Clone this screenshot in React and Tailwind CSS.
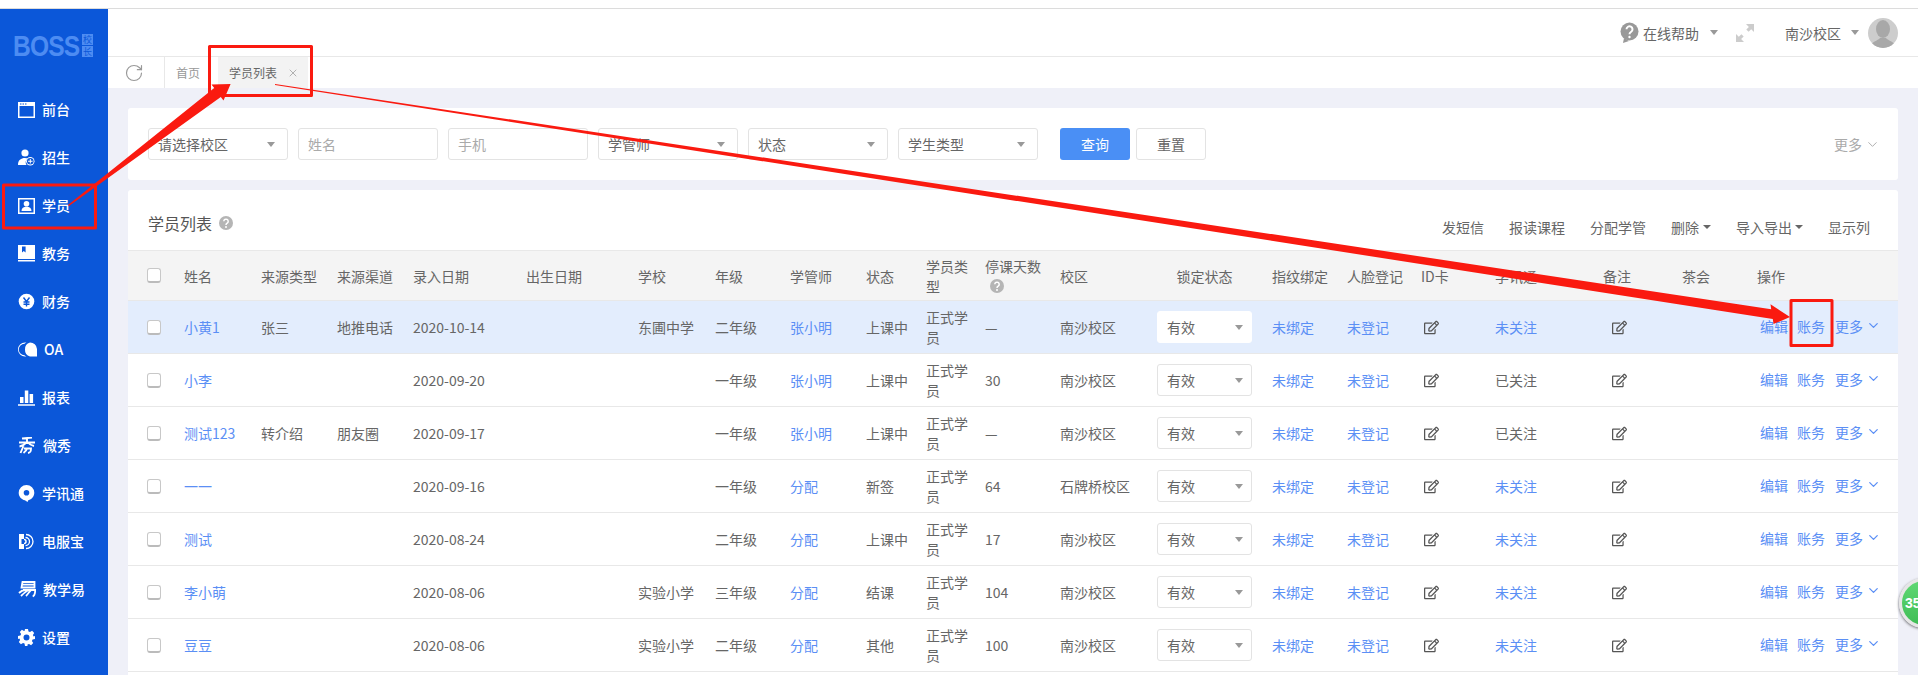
import React from "react";
import { ChevronDown, RotateCw, X } from "lucide-react";
import { FaRegEdit } from "react-icons/fa";

const Ic = ({ children }) => (
  <svg width="17" height="17" viewBox="0 0 17 17" className="shrink-0" fill="#fff">{children}</svg>
);

const nav = [
  ["前台", <Ic><path fillRule="evenodd" d="M0 1h17v16H0zM1.500 5v10.500h14V5z" /><path fill="#0b57d9" d="M2 2.400h1.500v1H2zM4.500 2.400H6v1H4.500zM7 2.400h1.500v1H7z" /></Ic>],
  ["招生", <Ic><circle cx="7" cy="4" r="3.600" /><path d="M0 16c0-5 3-7 7-7 1 0 2 .2 2.800.5A5 5 0 0 0 8.500 16z" /><circle cx="12.300" cy="12.300" r="4.200" fill="#fff" /><circle cx="12.300" cy="12.300" r="3.300" fill="#0b57d9" /><path d="M11.800 10h1v1.800h1.800v1h-1.800v1.800h-1v-1.800H10v-1h1.800z" /></Ic>],
  ["学员", <Ic><path fillRule="evenodd" d="M0 1h17v16H0zM1.500 2.500v13h14v-13z" /><circle cx="8.500" cy="6.800" r="2.800" /><path d="M3.500 14c0-3 2-4.200 5-4.200s5 1.200 5 4.200z" /></Ic>],
  ["教务", <Ic><path fillRule="evenodd" d="M0 0h17v14H0zM4 1.500v6l1.800-1.400L7.600 7.500v-6z" /><path d="M0 15h17v1.500H0z" /></Ic>],
  ["财务", <Ic><circle cx="8.500" cy="8.500" r="7.800" /><path fill="none" stroke="#0b57d9" strokeWidth="1.400" d="M5.500 4.500l3 4 3-4M8.500 8.500v5M5.500 9h6M5.500 11.300h6" /></Ic>],
  ["OA", <svg width="19" height="15" viewBox="0 0 19 15" className="shrink-0" fill="#fff"><path d="M7 0.500a7 7 0 0 0 0 14h1.500a8 8 0 0 1-2-1.300 5.500 5.500 0 0 1 0-11.400A8 8 0 0 1 8.500 .5z" /><path d="M12 .5a7 7 0 0 0-5 7 7 7 0 0 0 5 7h7V7a7 7 0 0 0-7-6.500z" /></svg>],
  ["报表", <Ic><path d="M2 8h3.500v6H2zM6.800 1.500h3.500V14H6.800zM11.600 5h3.500v9h-3.500zM0 15.300h17v1.500H0z" /></Ic>],
  ["微秀", <svg width="18" height="17" viewBox="0 0 18 17" className="shrink-0" fill="none" stroke="#fff" strokeWidth="1.900"><path d="M4 1.500l10-1M1 5.500h16M9 1v6M8 5.500C6.500 8 4 9 1.500 9.500M10 5.500c1.500 2 4 3 6 3.500M5.500 9L2.500 16M6 11.500h7c0 3-.5 4-3 4.500M9 11.500c-.5 2-2 3.500-3.500 4.500" /></svg>],
  ["学讯通", <Ic><path fillRule="evenodd" d="M8.500 0a7.800 7.800 0 0 0-7.800 7.800c0 3.800 2.700 6.800 6.200 7.500L9.500 17l.8-1.800c3.500-.8 6-3.800 6-7.400A7.800 7.800 0 0 0 8.500 0zm0 5a2.800 2.800 0 1 1 0 5.600 2.800 2.800 0 0 1 0-5.600z" /></Ic>],
  ["电服宝", <Ic><path d="M1 1h5v5H3.500v5H6v5H1z" /><path fill="none" stroke="#fff" strokeWidth="1.300" d="M7.500 4.500a4 4 0 0 1 0 8M8 1.500a7 7 0 0 1 0 14" /><path fill="none" stroke="#fff" strokeWidth="1.500" d="M6 6.500a2 2 0 0 1 0 4" /></Ic>],
  ["教学易", <svg width="18" height="17" viewBox="0 0 18 17" className="shrink-0" fill="none" stroke="#fff" strokeWidth="1.800"><path d="M4.500 1h12v5.500H3.500zM4 3.700h12M5 9h12.200c0 3-.5 5.500-2.500 6.500M1 12c2-2 4-3 6-3M3 15c3-3 5-5 8-6M8 15c2-2 3-4 5-6" /></svg>],
  ["设置", <Ic><path fillRule="evenodd" d="M7 0h3l.5 2.400 1.500.7 2.100-1.300 2.100 2.100-1.300 2.100.7 1.500L17 7v3l-2.400.5-.7 1.500 1.300 2.100-2.100 2.100-2.100-1.300-1.500.7L9.500 17H7l-.5-2.400-1.500-.7-2.100 1.300-2.100-2.100 1.300-2.100-.7-1.500L0 10V7l2.400-.5.7-1.500L1.800 2.900 3.900.8 6 2.100l.5-.2zM8.500 5.500a3 3 0 1 0 0 6 3 3 0 0 0 0-6z" /></Ic>],
];

const Caret = () => (
  <span className="inline-block w-0 h-0 border-x-[4.5px] border-x-transparent border-t-[5px] border-t-[#999]" />
);
const SmallCaret = () => (
  <span className="inline-block w-0 h-0 border-x-[4px] border-x-transparent border-t-[4px] border-t-[#666]" />
);

const FSelect = ({ label }) => (
  <div className="w-[140px] h-[32px] border border-[#e3e3e3] rounded-[3px] flex items-center justify-between pl-[9px] pr-[12px] text-[14px] text-[#666]">
    <span>{label}</span>
    <Caret />
  </div>
);
const FInput = ({ label }) => (
  <div className="w-[140px] h-[32px] border border-[#e3e3e3] rounded-[3px] flex items-center pl-[9px] text-[14px] text-[#aaa]">{label}</div>
);

const Help = ({ size = 14 }) => (
  <svg width={size} height={size} viewBox="0 0 14 14" className="shrink-0">
    <circle cx="7" cy="7" r="7" fill="#b5b5b5" />
    <path d="M4.800 5.300a2.200 2.200 0 1 1 3.400 1.900c-.8.500-1.200.9-1.200 1.800" fill="none" stroke="#fff" strokeWidth="1.500" />
    <circle cx="7" cy="11" r="1" fill="#fff" />
  </svg>
);

const colW = ["w-[56px]", "w-[77px]", "w-[76px]", "w-[76px]", "w-[113px]", "w-[112px]", "w-[77px]", "w-[75px]", "w-[76px]", "w-[60px]", "w-[59px]", "w-[75px]", "w-[97px]", "w-[115px]", "w-[75px]", "w-[74px]", "w-[74px]", "w-[108px]", "w-[79px]", "w-[75px]", "w-[141px]"];

const rows = [
  { name: "小黄1", st: "张三", ch: "地推电话", d: "2020-10-14", sc: "东圃中学", g: "二年级", m: "张小明", s: "上课中", days: "—", c: "南沙校区", f: false, on: true },
  { name: "小李", st: "", ch: "", d: "2020-09-20", sc: "", g: "一年级", m: "张小明", s: "上课中", days: "30", c: "南沙校区", f: true },
  { name: "测试123", st: "转介绍", ch: "朋友圈", d: "2020-09-17", sc: "", g: "一年级", m: "张小明", s: "上课中", days: "—", c: "南沙校区", f: true },
  { name: "一一", st: "", ch: "", d: "2020-09-16", sc: "", g: "一年级", m: "分配", s: "新签", days: "64", c: "石牌桥校区", f: false },
  { name: "测试", st: "", ch: "", d: "2020-08-24", sc: "", g: "二年级", m: "分配", s: "上课中", days: "17", c: "南沙校区", f: false },
  { name: "李小萌", st: "", ch: "", d: "2020-08-06", sc: "实验小学", g: "三年级", m: "分配", s: "结课", days: "104", c: "南沙校区", f: false },
  { name: "豆豆", st: "", ch: "", d: "2020-08-06", sc: "实验小学", g: "二年级", m: "分配", s: "其他", days: "100", c: "南沙校区", f: false },
];

const Check = () => (
  <span className="block w-[14px] h-[15px] rounded-[3px] border border-[#c8c8c8] border-b-2 border-b-[#bbb] bg-white" />
);
const link = "text-[#5b8ff5]";
const Pen = () => <FaRegEdit size={15} className="text-[#555]" />;

function Row({ r }) {
  return (
    <tr className={`h-[53px] border-b border-[#e8e8e8] ${r.on ? "bg-[#e3edfd]" : "bg-white"}`}>
      <td className="pl-[19px]"><Check /></td>
      <td className={link}>{r.name}</td>
      <td>{r.st}</td>
      <td>{r.ch}</td>
      <td>{r.d}</td>
      <td></td>
      <td>{r.sc}</td>
      <td>{r.g}</td>
      <td className={link}>{r.m}</td>
      <td>{r.s}</td>
      <td className="pr-[14px]">正式学员</td>
      <td>{r.days}</td>
      <td>{r.c}</td>
      <td>
        <div className={`w-[95px] h-[32px] rounded-[3px] border flex items-center justify-between pl-[9px] pr-[8px] bg-white ${r.on ? "border-white" : "border-[#e3e3e3]"}`}>
          <span>有效</span>
          <Caret />
        </div>
      </td>
      <td className={link}>未绑定</td>
      <td className={link}>未登记</td>
      <td className="pl-[3px]"><Pen /></td>
      <td className={r.f ? "" : link}>{r.f ? "已关注" : "未关注"}</td>
      <td className="pl-[9px]"><Pen /></td>
      <td></td>
      <td className="pl-[3px]">
        <div className={`flex items-center mb-[3px] ${link}`}>
          <span>编辑</span>
          <span className="ml-[9px]">账务</span>
          <span className="ml-[10px]">更多</span>
          <ChevronDown size={15} strokeWidth={2} className="ml-[3px]" />
        </div>
      </td>
    </tr>
  );
}

const heads = ["姓名", "来源类型", "来源渠道", "录入日期", "出生日期", "学校", "年级", "学管师", "状态"];

export default function App() {
  return (
    <div className="relative w-[1918px] h-[675px] overflow-hidden bg-white font-['Noto_Sans_CJK_SC','Noto_Sans',sans-serif] text-[14px] leading-[20px] text-[#666]">
      <div className="h-[9px] border-b border-[#dcdcdc] bg-white" />
      <div className="flex h-[666px]">
        <aside className="w-[108px] shrink-0 bg-[#0b57d9] text-white">
          <div className="h-[76px] pl-[13px] pt-[24px] flex items-start">
            <span className="w-[69px] whitespace-nowrap origin-left scale-x-[0.82] font-['Liberation_Sans',sans-serif] font-bold text-[30px] leading-[26px] tracking-[-1px] text-[#4d8cf2]">BOSS</span>
            <span className="flex flex-col gap-[1px] mt-[1px]">
              <span className="w-[11px] h-[11px] bg-[#4d8cf2] text-[#0b57d9] text-[9px] leading-[11px] text-center">校</span>
              <span className="w-[11px] h-[11px] bg-[#4d8cf2] text-[#0b57d9] text-[9px] leading-[11px] text-center">长</span>
            </span>
          </div>
          {nav.map(([t, icon]) => (
            <div key={t} className="h-[48px] flex items-center pl-[18px] gap-[7px] text-[14px]">
              {icon}
              <span className="font-medium">{t}</span>
            </div>
          ))}
        </aside>

        <main className="flex-1 min-w-0 flex flex-col bg-[#eff0f8]">
          <header className="h-[48px] bg-white border-b border-[#e8e8e8] flex items-center justify-end pr-[20px] shrink-0">
            <svg width="20" height="21" viewBox="0 0 20 21" className="mr-[3px]">
              <circle cx="9.500" cy="9.500" r="9" fill="#999" />
              <path d="M4 16l-1 5 6-2z" fill="#999" />
              <path d="M6.500 7.300a3 3 0 1 1 4.700 2.500c-1 .7-1.700 1.200-1.700 2.500" fill="none" stroke="#fff" strokeWidth="2" />
              <circle cx="9.500" cy="15" r="1.200" fill="#fff" />
            </svg>
            <span>在线帮助</span>
            <span className="ml-[11px] mb-[1px] flex"><Caret /></span>
            <svg width="18" height="18" viewBox="0 0 18 18" className="ml-[18px]" fill="#ccc">
              <path d="M10 0h8v8l-2.800-2.800-2.600 2.600-2.300-2.300 2.600-2.600zM8 18H0v-8l2.800 2.800 2.600-2.600 2.300 2.300-2.600 2.600z" />
            </svg>
            <span className="ml-[31px]">南沙校区</span>
            <span className="ml-[10px] mb-[1px] mr-[9px] flex"><Caret /></span>
            <svg width="30" height="30" viewBox="0 0 30 30" className="rounded-full">
              <rect width="30" height="30" fill="#cdcdcd" />
              <ellipse cx="15" cy="11" rx="7" ry="9" fill="#a8a8a8" />
              <path d="M2 30c1-7 8-7 10-10h6c2 3 9 3 10 10z" fill="#a8a8a8" />
            </svg>
          </header>

          <div className="h-[31px] bg-white flex items-stretch shrink-0">
            <div className="w-[57px] border-r border-[#e8e8e8] flex items-center pl-[16px]">
              <RotateCw size={20} strokeWidth={1.400} className="text-[#999]" />
            </div>
            <div className="w-[53px] flex items-center pl-[11px] text-[12px] text-[#999]">首页</div>
            <div className="w-[90px] bg-[#f3f3f3] flex items-center pl-[11px] text-[12px] text-[#666]">
              <span>学员列表</span>
              <X size={12} strokeWidth={1.500} className="ml-[10px] text-[#999]" />
            </div>
          </div>

          <div className="flex-1 px-[20px] pt-[20px] flex flex-col gap-[10px] min-h-0">
            <section className="h-[72px] shrink-0 bg-white rounded-[3px] px-[20px] flex items-center gap-[10px]">
              <FSelect label="请选择校区" />
              <FInput label="姓名" />
              <FInput label="手机" />
              <FSelect label="学管师" />
              <FSelect label="状态" />
              <FSelect label="学生类型" />
              <button className="ml-[12px] w-[70px] h-[32px] rounded-[3px] bg-[#4a8ff5] text-white text-[14px]">查询</button>
              <button className="-ml-[4px] w-[70px] h-[32px] rounded-[3px] border border-[#e3e3e3] text-[14px] text-[#666]">重置</button>
              <div className="ml-auto -mr-[2px] flex items-center text-[#aaa]">
                <span>更多</span>
                <ChevronDown size={15} strokeWidth={1.500} className="ml-[3px]" />
              </div>
            </section>

            <section className="flex-1 bg-white rounded-t-[3px] overflow-hidden">
              <div className="h-[60px] pt-[14px] pl-[20px] pr-[28px] flex items-center">
                <div className="flex items-center mb-[8px] gap-[7px] text-[16px] text-[#555]">
                  <span>学员列表</span>
                  <Help />
                </div>
                <div className="ml-auto flex items-center gap-[25px]">
                  <span>发短信</span>
                  <span>报读课程</span>
                  <span>分配学管</span>
                  <span className="flex items-center gap-[4px]">删除<SmallCaret /></span>
                  <span className="flex items-center gap-[3px]">导入导出<SmallCaret /></span>
                  <span>显示列</span>
                </div>
              </div>
              <table className="w-[1770px] table-fixed border-collapse text-left">
                <colgroup>
                  {colW.map((w, i) => <col key={i} className={w} />)}
                </colgroup>
                <thead>
                  <tr className="h-[50px] bg-[#f4f4f4] border-y border-[#e8e8e8]">
                    <th className="pl-[19px] font-normal"><Check /></th>
                    {heads.map((h) => <th key={h} className="font-normal">{h}</th>)}
                    <th className="font-normal pr-[14px]">学员类型</th>
                    <th className="font-normal">
                      <div className="w-[56px]">停课天数</div>
                      <div className="pl-[5px] h-[20px] flex items-center"><Help /></div>
                    </th>
                    <th className="font-normal">校区</th>
                    <th className="font-normal"><div className="w-[95px] text-center">锁定状态</div></th>
                    <th className="font-normal">指纹绑定</th>
                    <th className="font-normal">人脸登记</th>
                    <th className="font-normal">ID卡</th>
                    <th className="font-normal">学讯通</th>
                    <th className="font-normal">备注</th>
                    <th className="font-normal">茶会</th>
                    <th className="font-normal">操作</th>
                  </tr>
                </thead>
                <tbody>
                  {rows.map((r, i) => <Row key={i} r={r} />)}
                </tbody>
              </table>
            </section>
          </div>
        </main>
      </div>

      <div className="absolute left-[1899px] top-[578px] w-[50px] h-[50px] rounded-full border-[3px] border-[#e6e6e6] bg-[linear-gradient(#5fd873,#3fbd55)] shadow-[0_1px_3px_rgba(0,0,0,0.6)] pl-[3px] flex items-center text-white font-bold text-[14px] font-['Liberation_Sans',sans-serif]">35</div>

      <svg className="absolute left-0 top-0 pointer-events-none" width="1918" height="675" viewBox="0 0 1918 675">
        <g fill="none" stroke="#fa1a10" strokeWidth="3" strokeLinejoin="round">
          <rect x="3.500" y="185" width="92" height="43" />
          <rect x="209.500" y="46.500" width="102" height="49" />
          <rect x="1791" y="300.500" width="41" height="45" />
        </g>
        <polygon fill="#fa1a10" points="68,205 214.200,88.100 211.500,84.500 230.600,84 223.500,100.500 220.800,96.900 69,206" />
        <polygon fill="#fa1a10" points="275,84 1771.200,309.300 1770.500,304.300 1790,317 1773.500,324.100 1772.800,319.100 275,85" />
      </svg>
    </div>
  );
}
